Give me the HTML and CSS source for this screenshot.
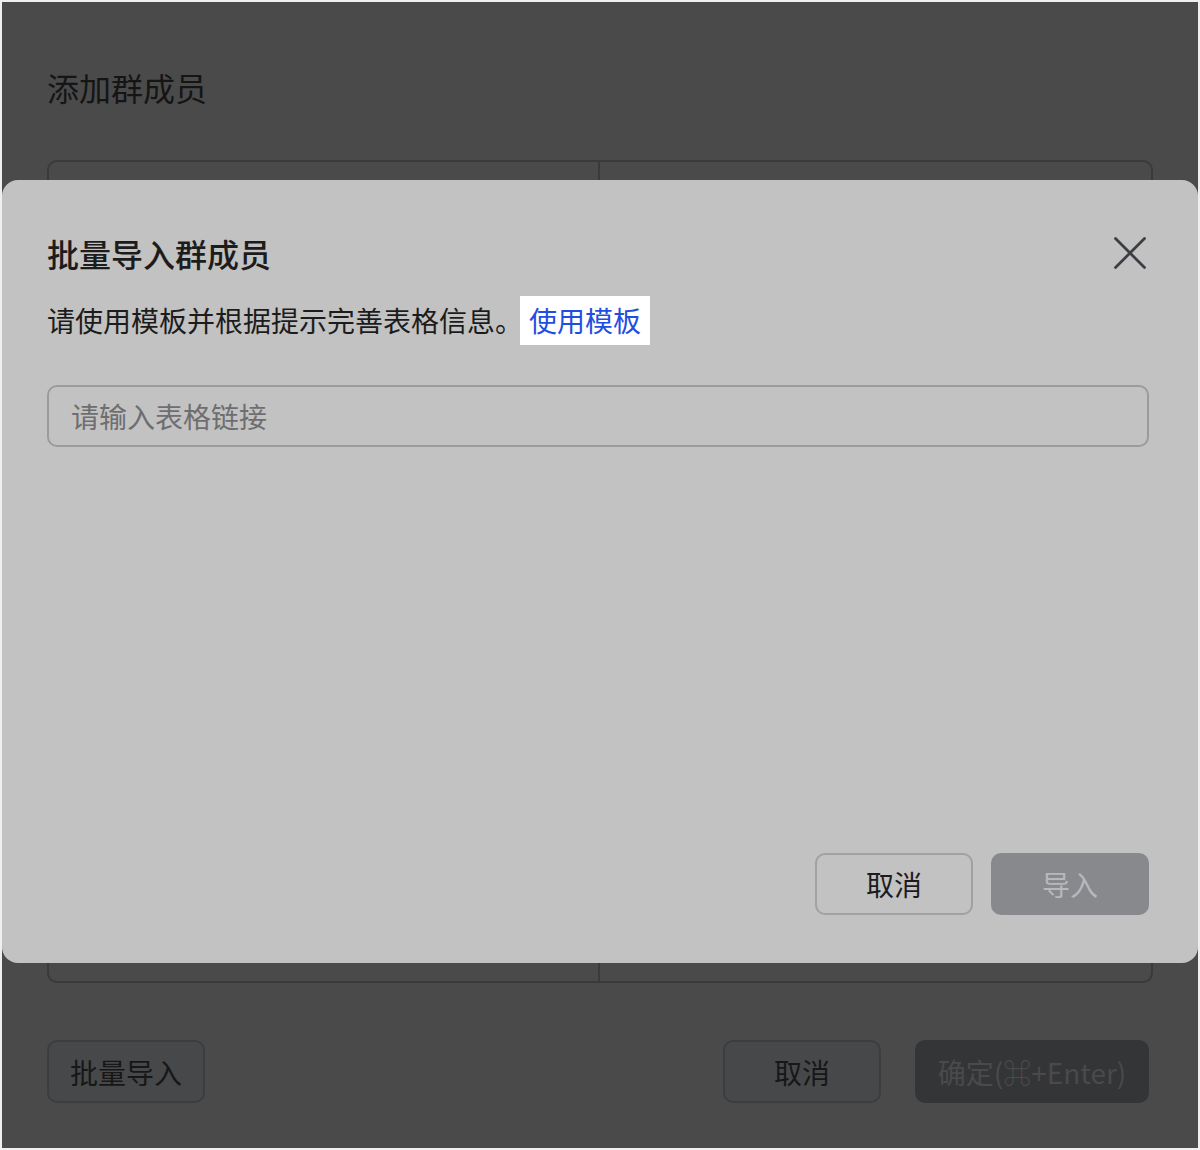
FILE: index.html
```html
<!DOCTYPE html>
<html lang="zh-CN">
<head>
  <meta charset="UTF-8">
  <title>添加群成员</title>
  <link rel="stylesheet" href="styles.css">
</head>
<body>
  <div class="app">
    <!-- dimmed dialog underneath -->
    <div class="page">
      <h1 class="page-title">添加群成员</h1>
      <div class="member-table">
        <div class="col"></div>
        <div class="col"></div>
      </div>
      <div class="page-footer">
        <button class="btn-dark">批量导入</button>
        <div class="page-actions">
          <button class="btn-dark">取消</button>
          <button class="btn-dark btn-confirm">确定(⌘+Enter)</button>
        </div>
      </div>
    </div>

    <!-- import dialog -->
    <div class="modal">
      <div class="modal-header">
        <h2 class="modal-title">批量导入群成员</h2>
        <svg class="close" width="36" height="36" viewBox="0 0 36 36">
          <path d="M3.5 3.5 L32.5 32.5 M32.5 3.5 L3.5 32.5" stroke="#3b3e43" stroke-width="2.8" stroke-linecap="round" fill="none"/>
        </svg>
      </div>
      <p class="desc">请使用模板并根据提示完善表格信息。<span class="template-link">使用模板</span></p>
      <input class="link-input" type="text" placeholder="请输入表格链接">
      <div class="modal-footer">
        <button class="btn btn-cancel">取消</button>
        <button class="btn btn-import">导入</button>
      </div>
    </div>
  </div>
</body>
</html>
```

FILE: styles.css
```css
* {
  box-sizing: border-box;
}
body {
  margin: 0;
  background: #efefef;
  font-family: "Noto Sans CJK SC", "Noto Sans", sans-serif;
}
.app {
  position: relative;
  margin: 2px;
  width: 1196px;
  height: 1146px;
  background: #4a4a4a;
  overflow: hidden;
}
.page {
  padding: 63px 45px 0;
  display: flex;
  flex-direction: column;
  height: 100%;
}
.page-title {
  margin: 0;
  font-size: 32px;
  line-height: 44px;
  font-weight: 400;
  color: #151515;
}
.member-table {
  margin-top: 51px;
  width: 1106px;
  height: 823px;
  border: 2px solid #3a3a3a;
  border-radius: 10px;
  display: grid;
  grid-template-columns: 551px 1fr;
}
.member-table .col:first-child {
  border-right: 2px solid #3a3a3a;
}
.page-footer {
  margin-top: 57px;
  width: 1102px;
  display: flex;
  justify-content: space-between;
}
.page-actions {
  display: flex;
  gap: 34px;
}
.btn-dark {
  height: 63px;
  width: 158px;
  border: 2px solid #3d3d3e;
  border-radius: 10px;
  background: #47484a;
  color: #171717;
  font-family: inherit;
  font-size: 28px;
}
.btn-confirm {
  width: 234px;
  border-color: #343537;
  background: #343537;
  color: #4a4a4a;
}

/* modal sits over the page */
.modal {
  position: absolute;
  left: 0;
  top: 178px;
  width: 1196px;
  height: 783px;
  background: #c2c2c2;
  border-radius: 16px;
  padding: 51px 49px 48px 45px;
  display: flex;
  flex-direction: column;
}
.modal-header {
  display: flex;
  align-items: center;
  justify-content: space-between;
  height: 44px;
}
.modal-title {
  margin: 0;
  font-size: 32px;
  line-height: 44px;
  font-weight: 500;
  color: #1c1c1c;
}
.close {
  margin-right: 1px;
}
.desc {
  margin: 21px 0 0;
  font-size: 28px;
  line-height: 49px;
  color: #1c1c1c;
}
.template-link {
  display: inline-block;
  margin-left: -3px;
  padding: 0 9px;
  background: #fff;
  color: #1f4fe0;
}
.link-input {
  margin-top: 40px;
  width: 100%;
  height: 62px;
  border: 2px solid #9b9b9e;
  border-radius: 10px;
  background: transparent;
  padding: 0 22px;
  font-family: inherit;
  font-size: 28px;
  outline: none;
}
.link-input::placeholder {
  color: #6e6e70;
}
.modal-footer {
  margin-top: auto;
  display: flex;
  justify-content: flex-end;
  gap: 18px;
}
.btn {
  width: 158px;
  height: 62px;
  border-radius: 10px;
  font-family: inherit;
  font-size: 28px;
}
.btn-cancel {
  border: 2px solid #a1a1a4;
  background: transparent;
  color: #1c1c1c;
}
.btn-import {
  border: none;
  background: #87898d;
  color: #b7b8ba;
}
```
